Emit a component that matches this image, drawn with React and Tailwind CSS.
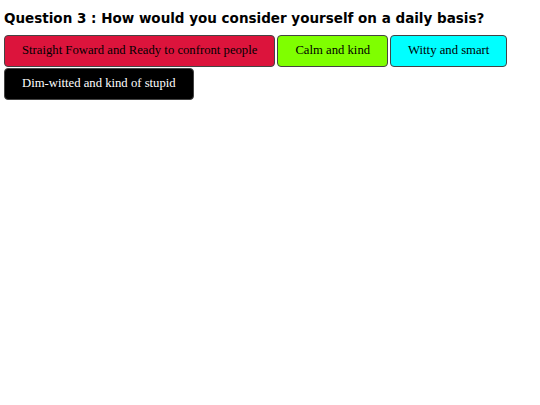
export default function App() {
  const answers = [
    { label: 'Straight Foward and Ready to confront people', cls: 'bg-[#dc143c] text-black' },
    { label: 'Calm and kind', cls: 'bg-[#7fff00] text-black' },
    { label: 'Witty and smart', cls: 'bg-[#00ffff] text-black' },
    { label: 'Dim-witted and kind of stupid', cls: 'bg-black text-white' },
  ];

  return (
    <div className="min-h-screen bg-white px-[4px] pt-[10px]">
      {/* Question */}
      <h2 className="font-['DejaVu_Sans',Verdana,sans-serif] font-bold text-[13.5px] leading-[17px] text-black">
        Question 3 : How would you consider yourself on a daily basis?
      </h2>

      {/* Answers */}
      <div className="mt-[8px] flex flex-wrap gap-x-[2px] gap-y-px w-[510px]">
        {answers.map((a) => (
          <button
            key={a.label}
            className={`${a.cls} h-[32px] px-[17px] border border-[#444] rounded-[4px] font-['Liberation_Serif',serif] text-[12.7px]`}
          >
            {a.label}
          </button>
        ))}
      </div>
    </div>
  );
}
